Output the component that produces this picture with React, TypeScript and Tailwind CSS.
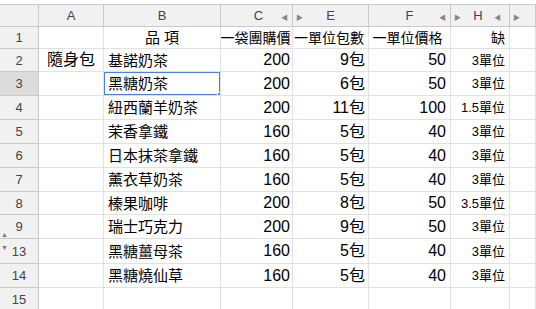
import React from 'react';

type Row = { n: string; a?: string; b?: string; c?: string; e?: string; f?: string; h?: string; hSmall?: boolean; h_px: number };

const rows: Row[] = [
  { n: '1', b: '品 項', c: '一袋團購價', e: '一單位包數', f: '一單位價格', h: '缺', h_px: 22 },
  { n: '2', a: '隨身包', b: '基諾奶茶', c: '200', e: '9包', f: '50', h: '3單位', hSmall: true, h_px: 23 },
  { n: '3', b: '黑糖奶茶', c: '200', e: '6包', f: '50', h: '3單位', hSmall: true, h_px: 24 },
  { n: '4', b: '紐西蘭羊奶茶', c: '200', e: '11包', f: '100', h: '1.5單位', hSmall: true, h_px: 24 },
  { n: '5', b: '茉香拿鐵', c: '160', e: '5包', f: '40', h: '3單位', hSmall: true, h_px: 24 },
  { n: '6', b: '日本抹茶拿鐵', c: '160', e: '5包', f: '40', h: '3單位', hSmall: true, h_px: 24 },
  { n: '7', b: '薰衣草奶茶', c: '160', e: '5包', f: '40', h: '3單位', hSmall: true, h_px: 24 },
  { n: '8', b: '榛果咖啡', c: '200', e: '8包', f: '50', h: '3.5單位', hSmall: true, h_px: 23 },
  { n: '9', b: '瑞士巧克力', c: '200', e: '9包', f: '50', h: '3單位', hSmall: true, h_px: 24 },
  { n: '13', b: '黑糖薑母茶', c: '160', e: '5包', f: '40', h: '3單位', hSmall: true, h_px: 25 },
  { n: '14', b: '黑糖燒仙草', c: '160', e: '5包', f: '40', h: '3單位', hSmall: true, h_px: 24 },
  { n: '15', h_px: 24 },
];

const cols = 'grid grid-cols-[39px_65px_117px_72px_76px_82px_59px_1fr]';
const cell = 'border-r border-b border-[#e1e1e1] flex items-center overflow-hidden whitespace-nowrap';
const head = 'border-r border-b border-[#c9c9c9] bg-[#f1f1f1] flex items-center justify-center text-[13px] text-[#444]';

const ArrowL = () => <span className="text-[7px] text-[#888] leading-none">◀</span>;
const ArrowR = () => <span className="text-[7px] text-[#888] leading-none">▶</span>;

export default function App() {
  return (
    <div
      className="w-[536px] h-[309px] overflow-hidden bg-white text-black"
      style={{ fontFamily: '"Liberation Sans", Arial, "Noto Sans CJK TC", sans-serif' }}
    >
      <div className="h-[4px] bg-white" />
      {/* column headers */}
      <div className={`${cols} h-[23px] border-t border-[#c9c9c9]`}>
        <div className={head} />
        <div className={head}>A</div>
        <div className={`${head} bg-[#dcdcdc]`}>B</div>
        <div className={`${head} relative`}>
          <span className="pl-[4px]">C</span>
          <span className="absolute right-[4px]"><ArrowL /></span>
        </div>
        <div className={`${head} relative`}>
          <span className="absolute left-[3px]"><ArrowR /></span>
          <span>E</span>
        </div>
        <div className={`${head} relative`}>
          <span>F</span>
          <span className="absolute right-[4px]"><ArrowL /></span>
        </div>
        <div className={`${head} relative`}>
          <span className="absolute left-[3px]"><ArrowR /></span>
          <span className="pr-[4px]">H</span>
          <span className="absolute right-[8px]"><ArrowL /></span>
        </div>
        <div className={`${head} relative justify-start`}>
          <span className="pl-[3px]"><ArrowR /></span>
        </div>
      </div>

      {rows.map((r) => {
        const sel = r.n === '3';
        const first = r.n === '1';
        const big = first ? 'text-[14px] leading-none' : 'text-[16px] leading-none';
        const num = first ? 'justify-center' : 'justify-end';
        return (
          <div key={r.n} className={cols} style={{ height: r.h_px }}>
            <div
              className={`relative border-r border-b border-[#c9c9c9] ${sel ? 'bg-[#dcdcdc]' : 'bg-[#f1f1f1]'} flex items-center justify-center text-[13px] text-[#444] pt-[1px]`}
            >
              {r.n}
              {r.n === '13' && (
                <>
                  <span className="absolute left-[1px] top-[-8px] text-[7px] text-[#777] leading-none">▲</span>
                  <span className="absolute left-[1px] top-[5px] text-[7px] text-[#777] leading-none">▼</span>
                </>
              )}
            </div>
            <div className={`${cell} justify-center text-[16px] leading-none`}>{r.a}</div>
            <div className={`${cell} relative ${first ? 'justify-center' : 'justify-start pl-[4px]'} text-[15px] leading-none`}>
              {r.b}
              {sel && (
                <>
                  <div className="absolute inset-[-1px] border-2 border-[#4a80d8] pointer-events-none" />
                  <div className="absolute right-[-4px] bottom-[-4px] w-[7px] h-[7px] bg-[#4a80d8] border border-white" />
                </>
              )}
            </div>
            <div className={`${cell} ${num} pr-[2px] ${big}`}>{r.c}</div>
            <div className={`${cell} ${num} pr-[3px] ${big}`}>{r.e}</div>
            <div className={`${cell} ${num} pr-[4px] ${big}`}>{r.f}</div>
            <div className={`${cell} justify-end pr-[4px] ${r.hSmall ? 'text-[13px] leading-none' : big}`}>{r.h}</div>
            <div className={cell} />
          </div>
        );
      })}
    </div>
  );
}
